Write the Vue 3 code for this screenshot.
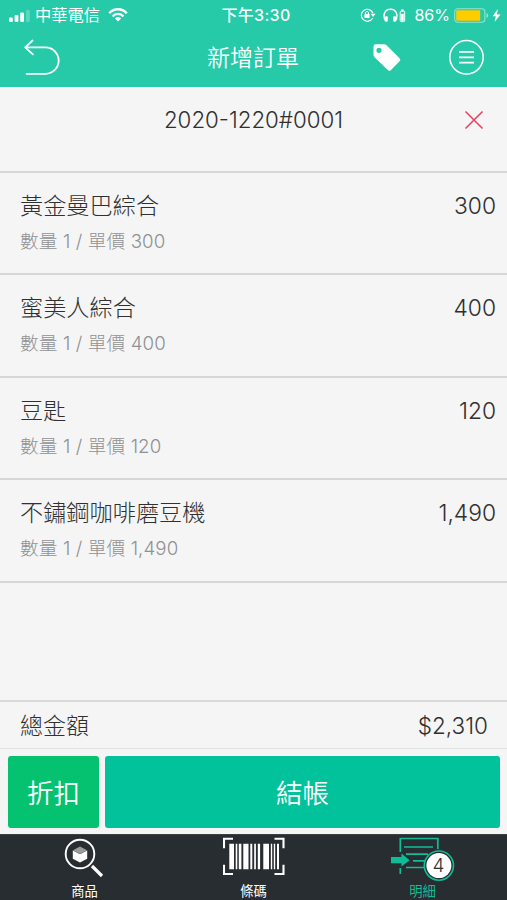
<script setup>
const items = [
  { name: '黃金曼巴綜合', qty: 1, price: '300' },
  { name: '蜜美人綜合', qty: 1, price: '400' },
  { name: '豆匙', qty: 1, price: '120' },
  { name: '不鏽鋼咖啡磨豆機', qty: 1, price: '1,490' },
]
</script>

<template>
  <div class="screen">
    <header class="header">
      <div class="status">
        <div class="status-left">
          <svg class="signal" width="22" height="12" viewBox="0 0 22 12">
            <rect x="0" y="7.5" width="3.8" height="4.5" rx="1" fill="#fff" />
            <rect x="5.6" y="5" width="3.8" height="7" rx="1" fill="#fff" />
            <rect x="11.2" y="2.5" width="3.8" height="9.5" rx="1" fill="#fff" />
            <rect x="17" y="0" width="3.8" height="12" rx="1" fill="#fff" opacity=".25" />
          </svg>
          <span class="carrier">中華電信</span>
          <svg class="wifi" width="20" height="14" viewBox="0 0 20 14" fill="none" stroke="#fff" stroke-width="2.3">
            <path d="M1.2 5.2C6-.1 14-.1 18.8 5.2" />
            <path d="M4.5 8.4C7.6 5.1 12.4 5.1 15.5 8.4" />
            <path d="M10 13.4L6.9 10.4Q10 7.6 13.1 10.4Z" fill="#fff" stroke="none" />
          </svg>
        </div>
        <span class="time">下午3:30</span>
        <div class="status-right">
          <svg width="16" height="14" viewBox="0 0 16 14" fill="none" stroke="#fff">
            <path d="M12.6 10.2A6 6 0 1 1 13 5.2" stroke-width="1.2" />
            <path d="M10.6 5.8H15.6L13.1 9Z" fill="#fff" stroke="none" />
            <rect x="4.4" y="6.1" width="5.2" height="4" rx=".6" fill="#fff" stroke="none" />
            <path d="M5.5 6.5V5a1.5 1.5 0 0 1 3 0v1.5" stroke-width="1" />
          </svg>
          <svg class="phones" width="24" height="15" viewBox="0 0 24 15">
            <path d="M2.4 12.6C.2 9 .2 1.2 7.5 1.2S14.8 9 12.6 12.6" fill="none" stroke="#fff" stroke-width="1.4" />
            <rect x="2" y="8.2" width="2.8" height="5.6" rx="1" fill="#fff" />
            <rect x="10.2" y="8.2" width="2.8" height="5.6" rx="1" fill="#fff" />
            <rect x="18.2" y="1.4" width="2.4" height="2" fill="#fff" />
            <rect x="17.2" y="3.2" width="4.5" height="10.4" rx=".8" fill="none" stroke="#fff" />
            <rect x="18.1" y="5.8" width="2.7" height="7" fill="#fff" />
          </svg>
          <span class="percent">86%</span>
          <svg class="battery" width="35" height="15" viewBox="0 0 35 15">
            <rect x=".7" y=".7" width="30.2" height="13.6" rx="3.2" fill="none" stroke="#fff" stroke-opacity=".5" stroke-width="1.1" />
            <rect x="2.2" y="2.3" width="24" height="10.4" rx="1" fill="#fc0" />
            <path d="M32.5 5v5q1.8-.8 1.8-2.5T32.5 5Z" fill="#fff" opacity=".5" />
          </svg>
          <svg class="bolt" width="9" height="13" viewBox="0 0 9 13">
            <path d="M5.8 0L.6 7.3H3.8L2.6 13L8.5 5.4H5.1Z" fill="#fff" />
          </svg>
        </div>
      </div>
      <div class="toolbar">
        <svg class="back" width="37" height="38" viewBox="0 0 37 38" fill="none" stroke="#fff" stroke-width="1.8" stroke-linecap="round" stroke-linejoin="round">
          <path d="M8.5 1.5L1.2 8.4L8.9 15.3M1.5 8.4H21.5A13.2 13.2 0 0 1 21.5 34.8H2.5" />
        </svg>
        <h1 class="title">新增訂單</h1>
        <svg class="tag" width="28" height="28" viewBox="0 0 28 28">
          <path fill-rule="evenodd" fill="#fff" d="M2.8.3H11.2Q12.6.3 13.6 1.3L26.8 14.5Q28 15.8 26.8 17.1L17.8 26.2Q16.4 27.5 15.1 26.2L1.6 13.2Q.5 12.1.5 10.8V2.6Q.5.3 2.8.3ZM6 3.7A2.6 2.6 0 1 0 6 8.9A2.6 2.6 0 1 0 6 3.7Z" />
        </svg>
        <svg class="menu" width="36" height="36" viewBox="0 0 36 36" fill="none" stroke="#fff">
          <circle cx="17.5" cy="18.3" r="16.7" stroke-width="1.5" />
          <path d="M10 12.8H25M10 18.4H25M10 23.7H25" stroke-width="1.8" />
        </svg>
      </div>
    </header>

    <section class="order">
      <span class="order-no">2020-1220#0001</span>
      <svg class="close" width="20" height="20" viewBox="0 0 20 20">
        <path d="M1.5 1.5L18.5 18.5M18.5 1.5L1.5 18.5" stroke="#f03a5d" stroke-width="1.5" />
      </svg>
    </section>

    <main class="list">
      <article v-for="item in items" :key="item.name" class="item">
        <div>
          <div class="name">{{ item.name }}</div>
          <div class="detail">數量 {{ item.qty }} / 單價 {{ item.price }}</div>
        </div>
        <div class="amount">{{ item.price }}</div>
      </article>
    </main>

    <section class="total">
      <span class="total-label">總金額</span>
      <span class="total-value">$2,310</span>
    </section>

    <section class="actions">
      <button class="btn discount">折扣</button>
      <button class="btn checkout">結帳</button>
    </section>

    <nav class="tabs">
      <div class="tab">
        <svg width="41" height="40" viewBox="0 0 41 40">
          <circle cx="16" cy="16" r="14.3" fill="none" stroke="#fff" stroke-width="1.9" />
          <path d="M28 28L38 38" stroke="#fff" stroke-width="3.2" />
          <path d="M16 8.4L23 12.3L16 16.1L9 12.3Z" fill="#999c9d" />
          <path d="M8.8 12.5L16 16.3L23.2 12.5V20.8L16 24.6L8.8 20.8Z" fill="#fff" />
        </svg>
        <span>商品</span>
      </div>
      <div class="tab">
        <svg width="62" height="40" viewBox="0 0 62 40">
          <path d="M10 .8H1V10.3M51.5 .8H60.5V10.3M1 26.8V36H10M51.5 36H60.5V26.8" fill="none" stroke="#fff" stroke-width="2.1" />
          <path fill="#fff" d="M6.3 5.8H11v25.5H6.3zM12.7 5.8h1.6v25.5h-1.6zM15.8 5.8h2.6v25.5h-2.6zM20.3 5.8h5.2v25.5h-5.2zM27.3 5.8h2v25.5h-2zM31.2 5.8h1.7v25.5h-1.7zM34.8 5.8h2.3v25.5h-2.3zM40.3 5.8H46v25.5h-5.7zM47.8 5.8h1.4v25.5h-1.4zM50.8 5.8h1.4v25.5h-1.4zM54 5.8h2v25.5h-2z" />
        </svg>
        <span>條碼</span>
      </div>
      <div class="tab active">
        <svg width="64" height="46" viewBox="0 0 64 46">
          <path d="M9.3 17V3.5H46.8V14M13 12H42M15 19.2H37M22 25.8H34M15 32.5H36M9.3 33V39" fill="none" stroke="#10bd99" stroke-width="1.7" />
          <path d="M0 22H10.5V18.4L18.6 25.2L10.5 31.6V28.3H0Z" fill="#0dbd98" />
          <circle cx="47.9" cy="30.6" r="15.4" fill="#10bd99" />
          <circle cx="47.9" cy="30.6" r="13.8" fill="#272d30" />
          <circle cx="47.9" cy="30.6" r="12.5" fill="#fff" />
          <text x="47.4" y="37.2" text-anchor="middle" class="badge">4</text>
        </svg>
        <span>明細</span>
      </div>
    </nav>
  </div>
</template>

<style>
body { margin: 0; }
</style>

<style scoped>
.screen {
  width: 507px;
  height: 900px;
  display: flex;
  flex-direction: column;
  overflow: hidden;
  background: #f5f5f5;
  color: #303030;
  font-family: Inter, "Noto Sans CJK TC", sans-serif;
  font-weight: 300;
}
svg { display: block; flex: none; }
.header { height: 87px; background: #26caa8; color: #fff; flex: none; }
.status {
  height: 30px;
  display: grid;
  grid-template-columns: 1fr auto 1fr;
  align-items: center;
  padding: 0 6px 0 9px;
  box-sizing: border-box;
  font-weight: 400;
  line-height: 30px;
}
.status-left, .status-right { display: flex; align-items: center; }
.status-right { justify-content: flex-end; }
.signal { margin-top: 1px; }
.carrier { font-size: 16.3px; margin-left: 4px; }
.wifi { margin-left: 8px; margin-top: -1px; }
.time { font-size: 16px; font-weight: 500; letter-spacing: .3px; margin-left: 2px; }
.phones { margin-left: 7px; }
.percent { font-size: 16px; margin-left: 7px; }
.battery { margin-left: 4px; }
.bolt { margin-left: 3px; }
.toolbar {
  height: 57px;
  display: grid;
  grid-template-columns: 207px 166px 76px 36px;
  align-items: start;
}
.back { margin: 9px 0 0 24px; }
.title { margin: 0; font-size: 23px; font-weight: 350; line-height: 56px; }
.tag { margin-top: 14px; }
.menu { margin-top: 9px; }
.order {
  height: 85.5px;
  flex: none;
  box-sizing: border-box;
  display: grid;
  grid-template-columns: 80px 1fr 80px;
  border-bottom: 2px solid #d5d7d7;
}
.order-no { grid-column: 2; text-align: center; font-size: 22.3px; line-height: 66px; }
.close { margin: 23px 0 0 37px; }
.list { height: 527px; flex: none; }
.item {
  height: 102.5px;
  box-sizing: border-box;
  display: flex;
  justify-content: space-between;
  padding: 16px 11px 0 20px;
  border-bottom: 2px solid #d5d7d7;
}
.name { font-size: 23.2px; line-height: 35px; }
.detail { font-size: 18.7px; letter-spacing: .1px; line-height: 28px; margin-top: 4px; color: #8f9193; }
.amount { font-size: 22.8px; line-height: 34px; }
.total {
  height: 49px;
  flex: none;
  box-sizing: border-box;
  display: flex;
  justify-content: space-between;
  padding: 0 19px 0 20px;
  border-top: 2px solid #d9dada;
  border-bottom: 1px solid #e1e2e2;
  font-size: 23px;
  line-height: 48px;
}
.total-value { font-size: 22.5px; line-height: 47px; }
.actions { display: flex; gap: 6px; padding: 7px 7px 6px 8px; height: 72px; flex: none; }
.btn {
  border: 0;
  border-radius: 3px;
  padding: 0;
  color: #fff;
  font: inherit;
  font-size: 26.5px;
  font-weight: 350;
}
.discount { width: 91px; background: #05c270; }
.checkout { flex: 1; background: #02c29c; }
.tabs {
  flex: 1;
  display: grid;
  grid-template-columns: repeat(3, 1fr);
  background: #272d30;
  border-top: 1px solid #3b4043;
}
.tab { display: flex; flex-direction: column; align-items: center; color: #fff; font-weight: 400; }
.tab svg { height: 46px; }
.tab span { font-size: 13.3px; line-height: 20px; }
.tab.active { color: #10bd99; }
.badge { font-size: 19px; font-weight: 300; fill: #303030; }
</style>
